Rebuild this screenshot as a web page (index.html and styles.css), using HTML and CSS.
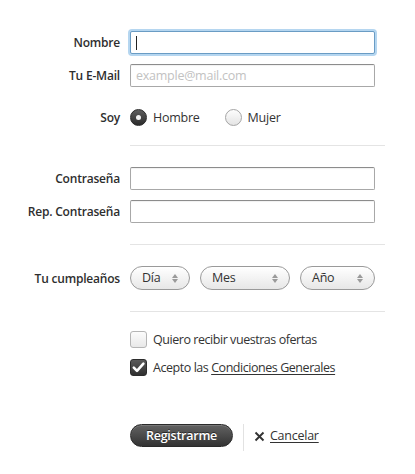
FILE: index.html
```html
<!DOCTYPE html>
<html lang="es">
<head>
<meta charset="utf-8">
<title>Registro</title>
<link rel="stylesheet" href="styles.css">
</head>
<body>
<form class="form">
  <div class="row r-nombre">
    <label class="lbl">Nombre</label>
    <div class="field focus"><input class="inp" type="text"><span class="caret"></span></div>
  </div>
  <div class="row r-email">
    <label class="lbl">Tu E-Mail</label>
    <div class="field"><input class="inp" type="text" placeholder="example@mail.com"></div>
  </div>
  <div class="row r-soy">
    <label class="lbl">Soy</label>
    <div class="radios">
      <span class="opt"><span class="radio on"></span>Hombre</span>
      <span class="opt"><span class="radio"></span>Mujer</span>
    </div>
  </div>
  <div class="sep s1"></div>
  <div class="row r-pass">
    <label class="lbl">Contraseña</label>
    <div class="field"><input class="inp" type="password"></div>
  </div>
  <div class="row r-rep">
    <label class="lbl">Rep. Contraseña</label>
    <div class="field"><input class="inp" type="password"></div>
  </div>
  <div class="sep s2"></div>
  <div class="row r-bday">
    <label class="lbl">Tu cumpleaños</label>
    <div class="selects">
      <span class="sel sel-dia">Día<span class="arrows"></span></span>
      <span class="sel sel-mes">Mes<span class="arrows"></span></span>
      <span class="sel sel-ano">Año<span class="arrows"></span></span>
    </div>
  </div>
  <div class="sep s3"></div>
  <div class="checks">
    <div class="chk c1"><span class="box"></span>Quiero recibir vuestras ofertas</div>
    <div class="chk c2"><span class="box on"><svg viewBox="0 0 17 17" width="17" height="17"><path d="M3.8 8.6 L7 11.8 L13.4 4.6" fill="none" stroke="#fff" stroke-width="2.6" stroke-linecap="round" stroke-linejoin="round"/></svg></span>Acepto las&nbsp;<a class="link" href="#">Condiciones Generales</a></div>
  </div>
  <div class="actions">
    <button class="btn" type="button">Registrarme</button>
    <span class="vsep"></span>
    <a class="cancel" href="#"><svg class="x" viewBox="0 0 11 11" width="11" height="11"><path d="M1.5 1.5 L9.5 9.5 M9.5 1.5 L1.5 9.5" stroke="#333" stroke-width="1.9" fill="none"/></svg><span class="link">Cancelar</span></a>
  </div>
</form>
</body>
</html>
```
FILE: styles.css
```css
* { box-sizing: border-box; }
html, body { margin: 0; padding: 0; background: #fff; }
body {
  font-family: "Open Sans", "Liberation Sans", sans-serif;
  font-size: 12.5px;
  letter-spacing: -0.25px;
  color: #333;
}
.form {
  width: 415px;
  padding-top: 31px;
  display: flex;
  flex-direction: column;
}
.row {
  display: grid;
  grid-template-columns: 120px 245px;
  column-gap: 10px;
  align-items: center;
}
.lbl {
  text-align: right;
  font-weight: 600;
  font-size: 12px;
  letter-spacing: -0.2px;
  color: #2e2e2e;
}
.field { position: relative; height: 23px; }
.inp {
  width: 100%;
  height: 23px;
  margin: 0;
  border: 1px solid #a8a8a8;
  border-top-color: #8c8c8c;
  border-radius: 2px;
  padding: 0 5px;
  font-family: inherit;
  font-size: 12.5px;
  letter-spacing: -0.25px;
  color: #333;
  background: #fff;
  box-shadow: inset 0 1px 1px rgba(0,0,0,0.06);
  outline: none;
}
.inp::placeholder { color: #c2c2c2; }
.focus .inp {
  border-color: #6a9cc4;
  box-shadow: 0 0 0 2px #b5d6f0;
}
.caret {
  position: absolute;
  left: 6px;
  top: 5px;
  width: 1px;
  height: 14px;
  background: #222;
}
.r-nombre { height: 23px; }
.r-email { margin-top: 10px; }
.r-soy { margin-top: 18px; height: 24px; }
.radios { display: flex; align-items: center; }
.opt { display: inline-flex; align-items: center; }
.opt + .opt { margin-left: 25px; }
.radio {
  width: 17px; height: 17px;
  border-radius: 50%;
  margin-right: 6px;
  border: 1px solid #a5a5a5;
  background: linear-gradient(#fdfdfd, #e4e4e4);
  box-shadow: 0 1px 0 rgba(255,255,255,0.8);
  position: relative;
}
.radio.on {
  border-color: #2a2a2a;
  background: linear-gradient(#5e5e5e, #2b2b2b);
}
.radio.on::after {
  content: "";
  position: absolute;
  left: 5px; top: 5px;
  width: 5px; height: 5px;
  border-radius: 50%;
  background: #f2f2f2;
}
.sep {
  margin-left: 130px;
  width: 255px;
  height: 1px;
  background: #e4e4e4;
}
.s1 { margin-top: 16px; }
.r-pass { margin-top: 21px; }
.r-rep { margin-top: 10px; }
.s2 { margin-top: 21px; }
.r-bday { margin-top: 21px; height: 24px; }
.selects { display: flex; gap: 10px; }
.sel {
  position: relative;
  height: 24px;
  border: 1px solid #9a9a9a;
  border-radius: 12px;
  background: linear-gradient(#ffffff, #e7e7e7);
  line-height: 22px;
  padding-left: 11px;
  color: #333;
}
.sel-dia { width: 60px; }
.sel-mes { width: 90px; }
.sel-ano { width: 75px; }
.arrows {
  position: absolute;
  right: 10px;
  top: 7px;
  width: 7px;
  height: 9px;
}
.arrows::before, .arrows::after {
  content: "";
  position: absolute;
  left: 0;
  border-left: 3.5px solid transparent;
  border-right: 3.5px solid transparent;
}
.arrows::before { top: 0; border-bottom: 4px solid #9a9a9a; }
.arrows::after { bottom: 0; border-top: 4px solid #9a9a9a; }
.s3 { margin-top: 21px; }
.checks {
  margin-top: 19px;
  padding-left: 130px;
  display: flex;
  flex-direction: column;
  gap: 11px;
}
.chk {
  display: flex;
  align-items: center;
  height: 17px;
  color: #333;
  letter-spacing: -0.45px;
}
.box {
  width: 17px; height: 17px;
  border-radius: 3px;
  margin-right: 6px;
  border: 1px solid #b5b5b5;
  background: linear-gradient(#fcfcfc, #e8e8e8);
  display: inline-flex;
}
.box.on {
  border-color: #2c2c2c;
  background: linear-gradient(#5a5a5a, #303030);
}
.box svg { margin: -1px; }
.link {
  color: #333;
  text-decoration: underline;
  text-underline-offset: 2px;
}
.actions {
  margin-top: 48px;
  padding-left: 130px;
  display: flex;
  align-items: flex-start;
}
.btn {
  width: 103px;
  height: 23px;
  border-radius: 12px;
  border: 1px solid #2a2a2a;
  background: linear-gradient(#626262, #333333);
  color: #fff;
  font-family: inherit;
  font-size: 12.5px;
  letter-spacing: -0.25px;
  font-weight: 600;
  padding: 0 0 1px;
  text-shadow: 0 -1px 0 rgba(0,0,0,0.5);
  box-shadow: inset 0 1px 0 rgba(255,255,255,0.15);
}
.vsep {
  width: 1px;
  height: 27px;
  background: #e2e2e2;
  margin: 0 10px;
}
.cancel {
  height: 23px;
  display: inline-flex;
  align-items: center;
  color: #333;
  text-decoration: none;
}
.x { margin-right: 5px; margin-top: 1px; }
```
